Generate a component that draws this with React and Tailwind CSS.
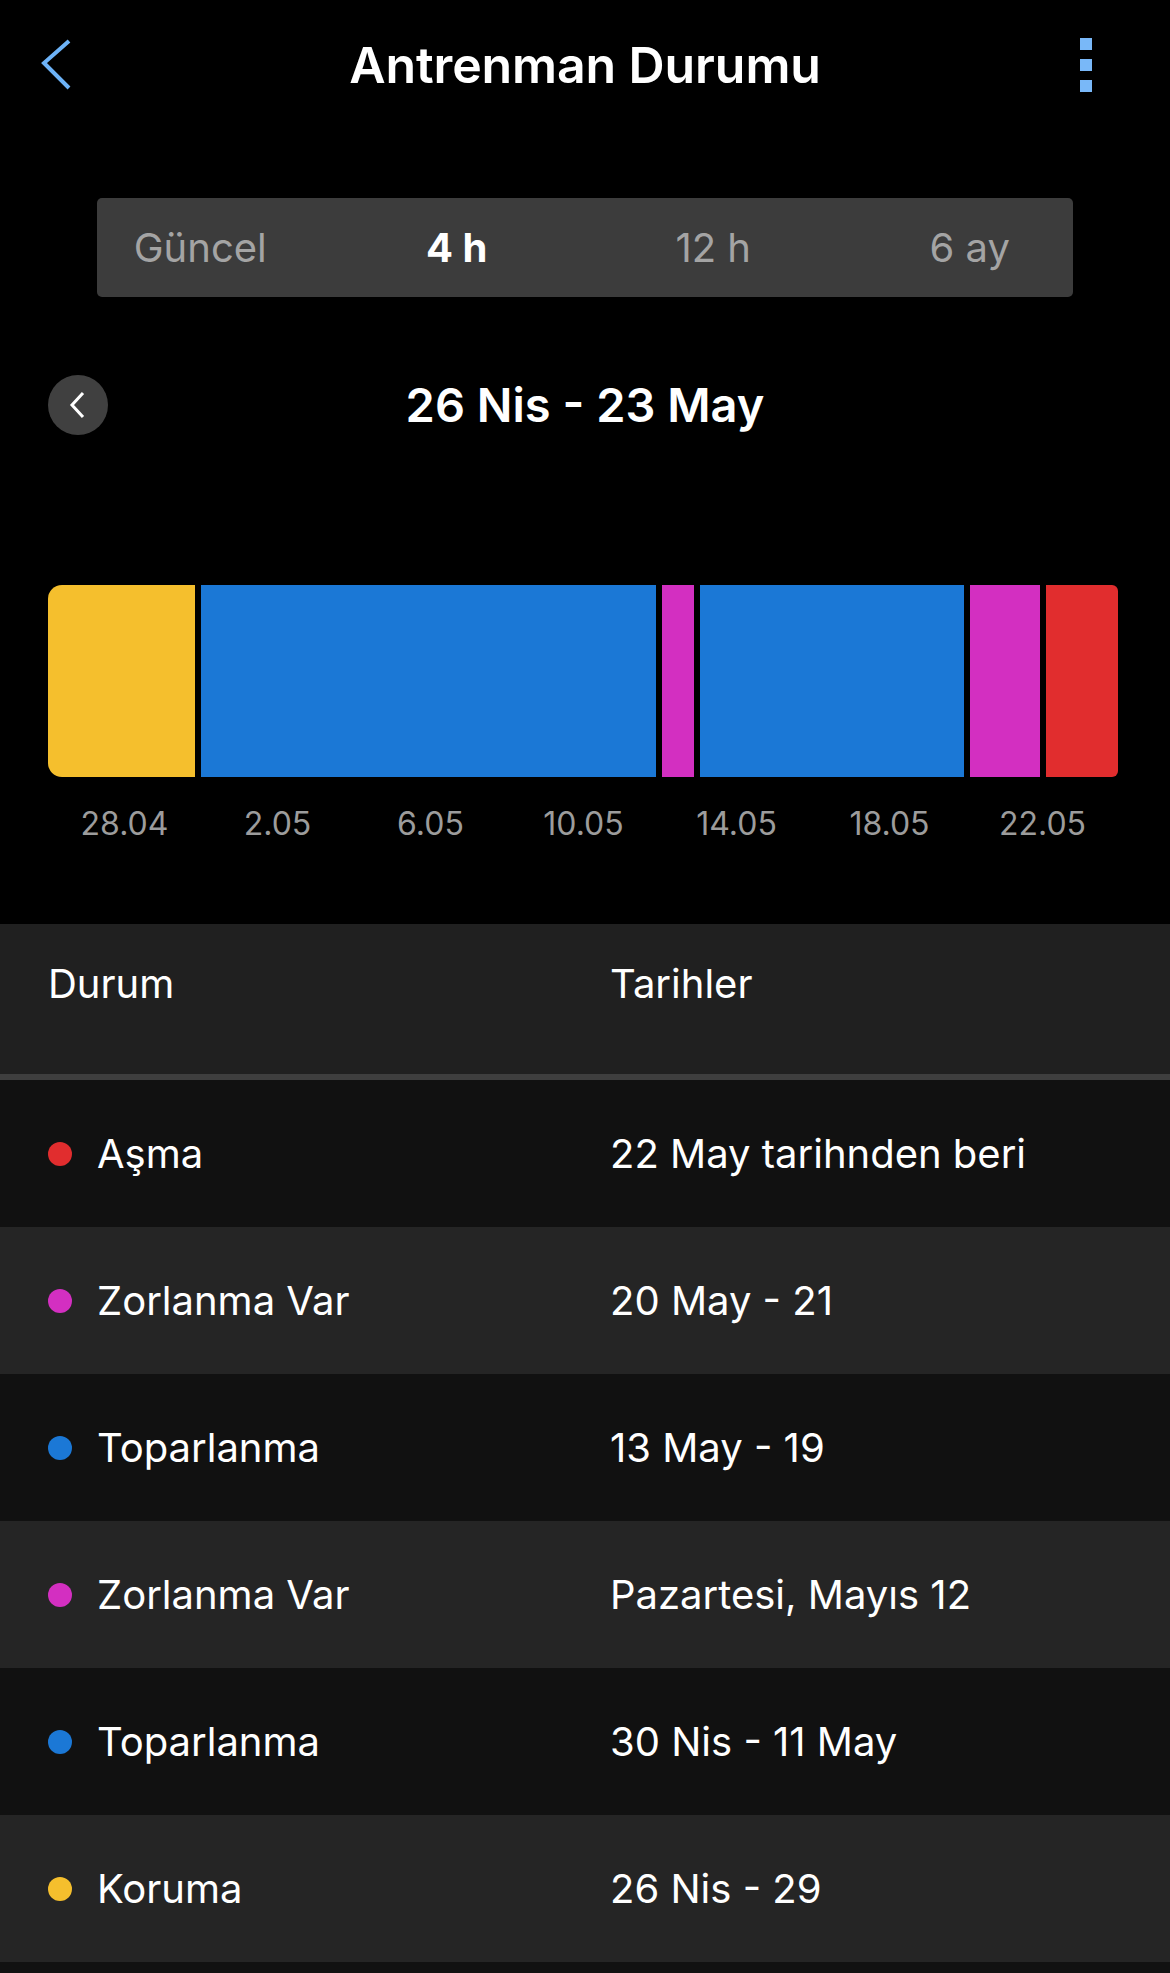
const SEGMENTS = [
  { w: 147, color: 'bg-[#f5bf2d]', cls: 'rounded-l-[14px]' },
  { w: 455, color: 'bg-[#1b78d6]', cls: '' },
  { w: 32, color: 'bg-[#d32fc1]', cls: '' },
  { w: 264, color: 'bg-[#1b78d6]', cls: '' },
  { w: 70, color: 'bg-[#d32fc1]', cls: '' },
  { w: 72, color: 'bg-[#e12d2e]', cls: 'rounded-r-[6px]' },
]

const TICKS = ['28.04', '2.05', '6.05', '10.05', '14.05', '18.05', '22.05']

const ROWS = [
  { status: 'Aşma', dates: '22 May tarihnden beri', dot: 'bg-[#e12d2e]' },
  { status: 'Zorlanma Var', dates: '20 May - 21', dot: 'bg-[#d32fc1]' },
  { status: 'Toparlanma', dates: '13 May - 19', dot: 'bg-[#1b78d6]' },
  { status: 'Zorlanma Var', dates: 'Pazartesi, Mayıs 12', dot: 'bg-[#d32fc1]' },
  { status: 'Toparlanma', dates: '30 Nis - 11 May', dot: 'bg-[#1b78d6]' },
  { status: 'Koruma', dates: '26 Nis - 29', dot: 'bg-[#f5bf2d]' },
]

const TABS = [
  { label: 'Güncel', active: false },
  { label: '4 h', active: true },
  { label: '12 h', active: false },
  { label: '6 ay', active: false },
]

export default function App() {
  return (
    <div className="min-h-[1973px] bg-black text-white font-['Inter',sans-serif]">
      {/* Top bar */}
      <div className="grid h-[130px] grid-cols-[1fr_auto_1fr] items-center pl-[40px] pr-[78px]">
        <svg width="32" height="54" viewBox="0 0 32 54" fill="none">
          <path d="M29 3 L4 25 L29 50" stroke="#6db3f8" strokeWidth="4" />
        </svg>
        <h1 className="translate-x-[19px] text-[50px] font-semibold tracking-[-0.1px]">Antrenman Durumu</h1>
        <div className="flex flex-col items-end gap-[9px]">
          <span className="block h-[12px] w-[12px] bg-[#79b8f8]" />
          <span className="block h-[12px] w-[12px] bg-[#79b8f8]" />
          <span className="block h-[12px] w-[12px] bg-[#79b8f8]" />
        </div>
      </div>

      {/* Range tabs */}
      <div className="mx-[97px] mt-[68px] h-[99px] rounded-[5px] bg-[#3c3c3c]">
        <div className="-mx-[25px] grid h-full grid-cols-4 items-center">
          {TABS.map(t => (
            <div
              key={t.label}
              className={`text-center text-[40px] ${t.active ? 'font-bold text-white' : 'text-[#a4a4a4]'}`}
            >
              {t.label}
            </div>
          ))}
        </div>
      </div>

      {/* Date range */}
      <div className="relative mt-[78px] flex h-[60px] items-center justify-center">
        <div className="absolute left-[48px] top-0 flex h-[60px] w-[60px] items-center justify-center rounded-full bg-[#404040]">
          <svg width="20" height="30" viewBox="0 0 20 30" fill="none">
            <path d="M15 3 L4 15 L15 27" stroke="#fff" strokeWidth="3" />
          </svg>
        </div>
        <h2 className="text-[47px] font-semibold">26 Nis - 23 May</h2>
      </div>

      {/* Status bar chart */}
      <div className="mt-[150px] flex h-[192px] gap-[6px] pl-[48px]">
        {SEGMENTS.map((s, i) => (
          <div key={i} className={`h-full shrink-0 ${s.color} ${s.cls}`} style={{ width: s.w }} />
        ))}
      </div>
      <div className="mt-[27px] flex pl-[48px]">
        {TICKS.map(t => (
          <div key={t} className="w-[153px] shrink-0 text-center text-[32px] leading-[40px] text-[#9c9c9c]">
            {t}
          </div>
        ))}
      </div>

      {/* Table */}
      <div className="mt-[80px]">
        <div className="grid h-[150px] grid-cols-[562px_1fr] bg-[#202020] pl-[48px] pt-[36px] text-[40px] leading-[48px]">
          <div>Durum</div>
          <div>Tarihler</div>
        </div>
        <div className="h-[6px] bg-[#3e3e3e]" />
        {ROWS.map((r, i) => (
          <div
            key={i}
            className={`grid h-[147px] grid-cols-[562px_1fr] items-center pl-[48px] text-[40px] leading-[48px] ${i % 2 === 0 ? 'bg-[#111111]' : 'bg-[#252525]'}`}
          >
            <div className="flex items-center gap-[25px]">
              <span className={`block h-[24px] w-[24px] rounded-full ${r.dot}`} />
              <span>{r.status}</span>
            </div>
            <div>{r.dates}</div>
          </div>
        ))}
        <div className="h-[20px] bg-[#111111]" />
      </div>
    </div>
  )
}
